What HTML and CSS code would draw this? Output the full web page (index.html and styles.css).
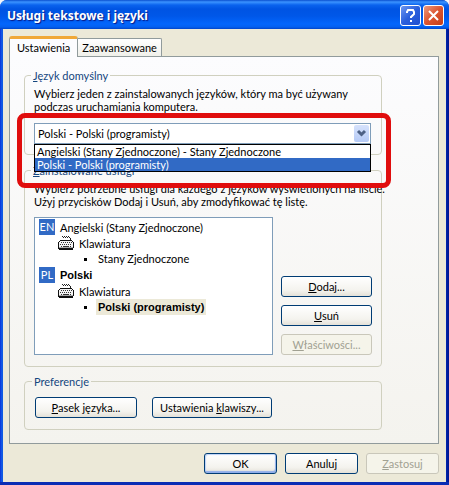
FILE: index.html
```html
<!DOCTYPE html>
<html lang="pl">
<head>
<meta charset="utf-8">
<title>Usługi tekstowe i języki</title>
<link rel="stylesheet" href="styles.css">
</head>
<body>
<svg width="0" height="0" class="defs" aria-hidden="true">
  <symbol id="keyboard" viewBox="0 0 16 14">
    <g shape-rendering="crispEdges">
      <path d="M4 0h1v1h-1zM5 1h1v1h-1zM6 0h1v1h-1zM7 1h1v1h-1zM8 0h1v1h-1zM9 1h1v1h-1zM10 0h1v1h-1zM11 1h1v1h-1zM12 2h1v2h-1z" fill="#222"/>
      <path d="M2 4h12v1h1v1h1v6h-1v2h-14v-1h-1v-7h1v-1h1z" fill="#111"/>
      <path d="M2 5h12v1h1v5h-14v-5h1z" fill="#f4f4f4"/>
      <path d="M3 6h1v1h-1zM5 6h1v1h-1zM7 6h1v1h-1zM9 6h1v1h-1zM11 6h1v1h-1zM13 6h1v1h-1zM2 8h1v1h-1zM4 8h1v1h-1zM6 8h1v1h-1zM8 8h1v1h-1zM10 8h1v1h-1zM12 8h1v1h-1zM3 10h1v1h-1zM5 10h6v1h-6zM12 10h1v1h-1z" fill="#333"/>
      <path d="M1 11h14v1h-14z" fill="#aaa"/>
    </g>
  </symbol>
</svg>
<main class="window">
  <header class="titlebar">
    <h1>Usługi tekstowe i języki</h1>
    <button class="caption help" aria-label="Pomoc"><svg width="19" height="19" viewBox="0 0 19 19"><path d="M6 7V6l1-2h5l1 2v2l-3 3v1M10 14v2" fill="none" stroke="#fff" stroke-width="2"/></svg></button>
    <button class="caption close" aria-label="Zamknij"><svg width="19" height="19" viewBox="0 0 19 19"><path d="M5 5l9 9M14 5l-9 9" fill="none" stroke="#fff" stroke-width="2"/></svg></button>
  </header>
  <div class="client">
    <div class="tabs" role="tablist">
      <button class="tab active" role="tab" aria-selected="true">Ustawienia</button>
      <button class="tab" role="tab" aria-selected="false">Zaawansowane</button>
    </div>
    <section class="pane">
      <fieldset class="default-language">
        <legend><u>J</u>ęzyk domyślny</legend>
        <label for="language">Wybierz jeden z zainstalowanych języków, który ma być używany<br>podczas uruchamiania komputera.</label>
        <div class="combo">
          <select id="language"><option>Polski - Polski (programisty)</option></select>
          <svg class="arrow" width="15" height="17" viewBox="0 0 15 17"><path d="M4 6l3.500 3.500L11 6" fill="none" stroke="#4d6185" stroke-width="3"/></svg>
          <ul class="options" role="listbox">
            <li role="option">Angielski (Stany Zjednoczone) - Stany Zjednoczone</li>
            <li role="option" aria-selected="true" class="selected">Polski - Polski (programisty)</li>
          </ul>
          <div class="marker"></div>
        </div>
      </fieldset>
      <fieldset class="services">
        <legend><u>Z</u>ainstalowane usługi</legend>
        <p>Wybierz potrzebne usługi dla każdego z języków wyświetlonych na liście.<br>Użyj przycisków Dodaj i Usuń, aby zmodyfikować tę listę.</p>
        <div class="service-row">
          <ul class="tree">
            <li><span class="code">EN</span>Angielski (Stany Zjednoczone)</li>
            <li class="device"><svg width="16" height="14"><use href="#keyboard"/></svg>Klawiatura</li>
            <li class="layout"><span>Stany Zjednoczone</span></li>
            <li class="bold"><span class="code">PL</span>Polski</li>
            <li class="device"><svg width="16" height="14"><use href="#keyboard"/></svg>Klawiatura</li>
            <li class="layout bold"><span class="current">Polski (programisty)</span></li>
          </ul>
          <div class="actions">
            <button class="btn"><u>D</u>odaj...</button>
            <button class="btn"><u>U</u>suń</button>
            <button class="btn" disabled><u>W</u>łaściwości...</button>
          </div>
        </div>
      </fieldset>
      <fieldset class="preferences">
        <legend>Preferencje</legend>
        <div class="pref-row">
          <button class="btn bar"><u>P</u>asek języka...</button>
          <button class="btn keys">Ustawienia <u>k</u>lawiszy...</button>
        </div>
      </fieldset>
    </section>
    <footer>
      <button class="btn default">OK</button>
      <button class="btn">Anuluj</button>
      <button class="btn" disabled><u>Z</u>astosuj</button>
    </footer>
  </div>
</main>
</body>
</html>
```
FILE: styles.css
```css
* { box-sizing: border-box; }
body {
  margin: 0;
  background: #f4f6fb;
  font: 11px/13px Lato, "Liberation Sans", Arial, sans-serif;
  color: #000;
}
.defs { position: absolute; }
h1, p, ul { margin: 0; padding: 0; }
ul { list-style: none; }
button, select { font: inherit; color: inherit; }
.window {
  background: linear-gradient(90deg, #0831d9, #1660e8 2px, #0855dd 3px, #0026b0 calc(100% - 3px), #00138c);
  border-radius: 7px 7px 0 0;
  overflow: hidden;
}
.titlebar {
  display: flex;
  align-items: center;
  gap: 2px;
  height: 29px;
  padding: 2px 5px 0 7px;
  background: linear-gradient(#0a50cf, #3b93ff 2px, #0a63ee 5px, #0054e3 9px, #0057e8 16px, #0366fc 24px, #0460f0 27px, #0144c9);
}
h1 {
  flex: 1;
  font: bold 12px/18px "Noto Sans", sans-serif;
  color: #fff;
  text-shadow: 1px 1px 1px #0a1883;
}
.caption {
  width: 21px;
  height: 21px;
  padding: 0;
  border: 1px solid #fff;
  border-radius: 3px;
}
.caption svg { display: block; }
.help { background: linear-gradient(135deg, #6d97f0, #2a5fdc 50%, #1e4fd0); }
.close { background: linear-gradient(135deg, #eb9a80, #dc5430 50%, #c53d17); }
.client {
  margin: 0 3px;
  padding: 7px 7px 8px 6px;
  background: #ece9d8;
}
.window::after { content: ""; display: block; height: 3px; background: #0a2cb4; }
.tabs { display: flex; align-items: flex-end; height: 20px; }
.tab {
  height: 18px;
  padding: 0 4px;
  border: 1px solid #919b9c;
  border-width: 1px 1px 0 0;
  border-radius: 0 2px 0 0;
  background: linear-gradient(#fff, #f0f0ea);
}
.tab.active {
  z-index: 1;
  height: 21px;
  margin-bottom: -1px;
  padding: 0 7px 2px;
  border-width: 3px 1px 0;
  border-top-color: #f0a838;
  border-radius: 3px 3px 0 0;
  background: #fcfcfe;
}
.pane {
  padding: 12px 56px 13px 14px;
  border: 1px solid #919b9c;
  background: linear-gradient(#fcfcfe, #f4f3ee);
}
fieldset {
  min-width: 0;
  margin: 0;
  border: 1px solid #d0d0bf;
  border-radius: 4px;
}
legend { margin-left: -3px; padding: 0 2px; color: #14467e; }
.default-language { padding: 5px 10px 10px 9px; }
label { display: block; white-space: nowrap; }
.combo { position: relative; margin-top: 10px; }
select {
  display: block;
  width: 100%;
  height: 21px;
  padding: 0 3px;
  appearance: none;
  border: 1px solid #7f9db9;
  border-radius: 0;
  background: #fff;
}
.arrow {
  position: absolute;
  top: 2px;
  right: 2px;
  border-radius: 2px;
  background: linear-gradient(#d6e2fc, #b5caf6);
}
.options {
  position: absolute;
  top: 21px;
  left: 0;
  right: 0;
  z-index: 2;
  border: 1px solid #000;
  background: #fff;
}
.options li { padding-left: 2px; white-space: nowrap; }
.options .selected { background: #316ac5; color: #fff; }
.marker {
  position: absolute;
  inset: -10px -20px -44px -17px;
  z-index: 3;
  border: 5px solid #e00d0d;
  border-radius: 8px;
  pointer-events: none;
}
.services { margin-top: 9px; padding: 5px 9px 11px; }
.services p { white-space: nowrap; }
.service-row { display: flex; align-items: flex-end; gap: 8px; margin-top: 9px; }
.tree {
  flex: 1;
  height: 138px;
  padding: 1px 4px;
  border: 1px solid #7f9db9;
  background: #fff;
}
.tree li { display: flex; align-items: center; height: 16px; white-space: nowrap; }
.code {
  width: 16px;
  margin-right: 5px;
  background: #316ac5;
  color: #fff;
  font-weight: normal;
  line-height: 16px;
  text-align: center;
}
.tree .device { gap: 5px; padding-left: 19px; }
.tree .layout { gap: 9px; padding-left: 45px; }
.layout::before { content: ""; width: 3px; height: 3px; background: #000; }
.layout span { padding: 0 2px; line-height: 16px; }
.current { background: #ece9d8; }
.bold { font-family: "Liberation Sans", Arial, sans-serif; font-weight: bold; }
.bold .code { font-family: Lato, sans-serif; }
.actions { display: grid; gap: 8px; width: 91px; }
.btn {
  height: 21px;
  padding: 0;
  border: 1px solid #003c74;
  border-radius: 3px;
  background: linear-gradient(#fff, #f4f3ee 70%, #e4e1d8);
}
.btn:disabled { border-color: #c9c7ba; background: #f5f4ea; color: #a1a192; }
.default { box-shadow: inset -1px -2px 1px #8fadea, inset 1px 1px 1px #bcd2f8; }
.preferences { margin-top: 8px; padding: 9px 10px 11px; }
.pref-row { display: flex; gap: 15px; }
.bar { width: 102px; }
.keys { width: 120px; }
footer { display: flex; justify-content: flex-end; gap: 8px; padding-top: 9px; }
footer .btn { width: 73px; }
```
